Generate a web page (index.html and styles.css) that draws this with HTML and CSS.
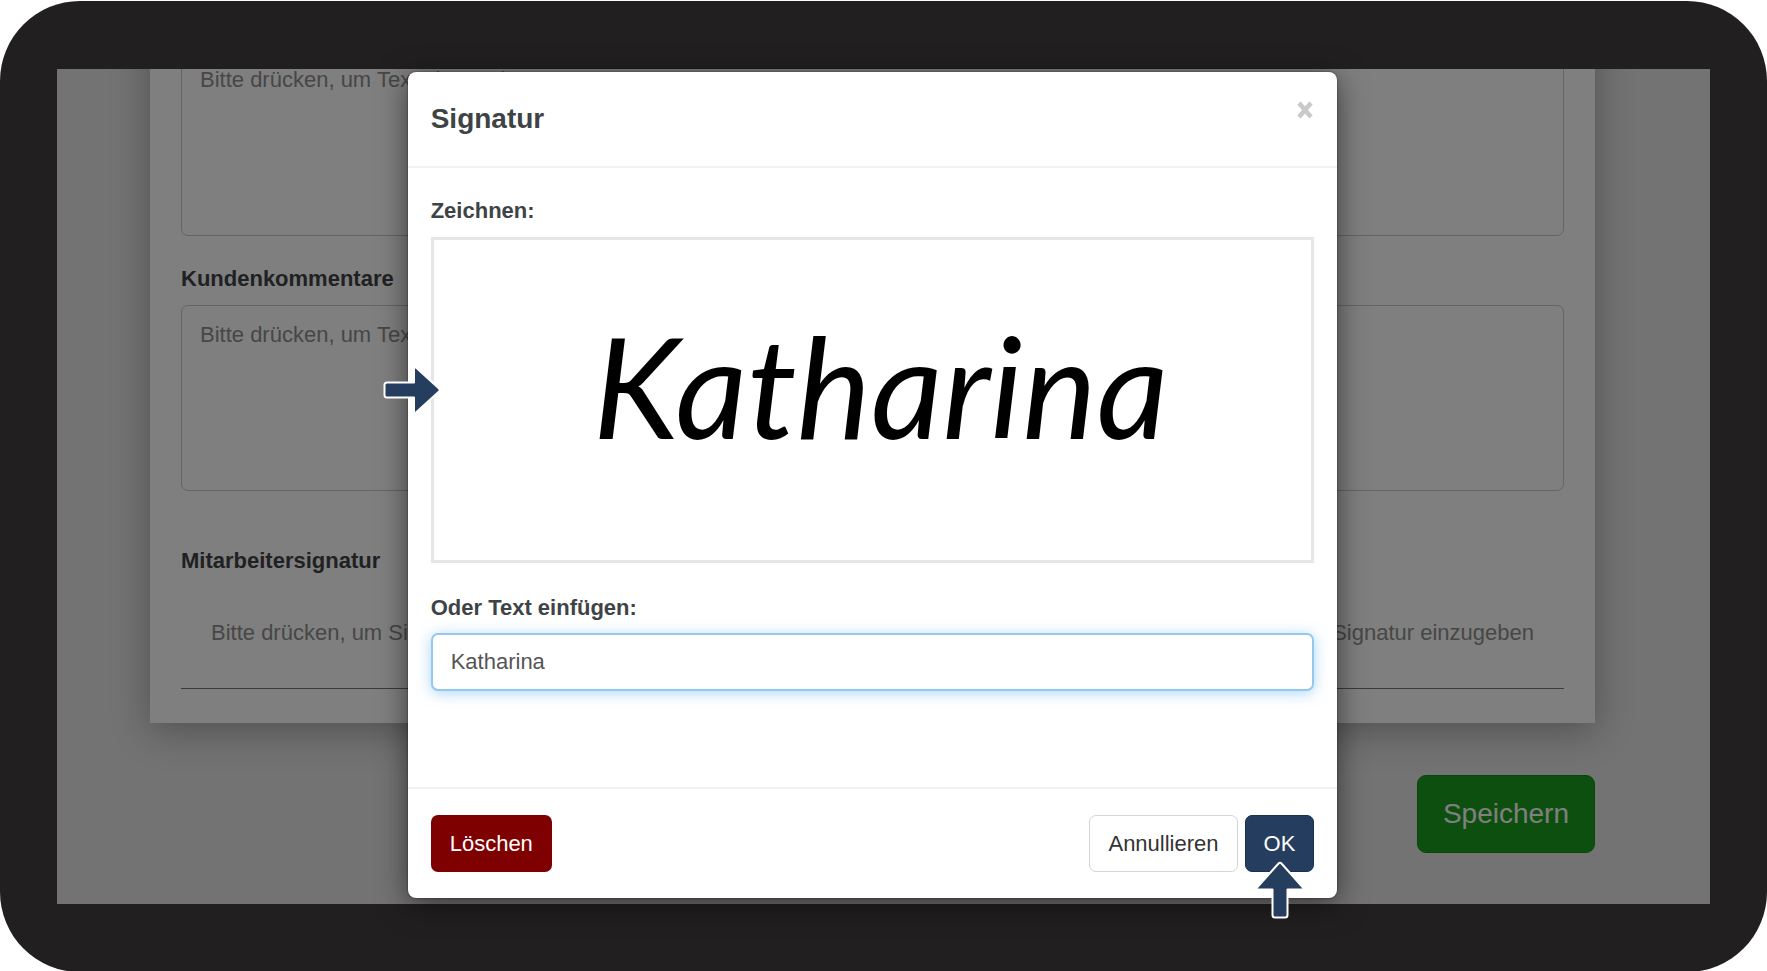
FILE: index.html
```html
<!DOCTYPE html>
<html lang="de">
<head>
<meta charset="utf-8">
<meta name="viewport" content="width=device-width, initial-scale=1">
<title>Signatur</title>
<link rel="stylesheet" href="styles.css">
</head>
<body>
<div class="device">
  <div class="screen">
    <main class="page">
      <section class="card">
        <textarea class="comment" aria-label="Kommentare" placeholder="Bitte drücken, um Text einzugeben"></textarea>
        <label class="label" for="customer-comments">Kundenkommentare</label>
        <textarea class="comment" id="customer-comments" placeholder="Bitte drücken, um Text einzugeben"></textarea>
        <h2 class="label label-signature">Mitarbeitersignatur</h2>
        <div class="signatures">
          <button class="sign" type="button">Bitte drücken, um Signatur einzugeben</button>
          <button class="sign" type="button">Bitte drücken, um Signatur einzugeben</button>
        </div>
      </section>
      <button class="save" type="button">Speichern</button>
    </main>
    <div class="backdrop">
      <div class="modal" role="dialog" aria-labelledby="modal-title">
        <header class="modal-header">
          <h1 class="modal-title" id="modal-title">Signatur</h1>
          <button class="close" type="button" aria-label="Schließen">
            <svg width="16" height="18" viewBox="0 0 16 18"><path d="M2 2 14 16M14 2 2 16" stroke="#c9c9c9" stroke-width="4.500" fill="none"/></svg>
          </button>
        </header>
        <div class="modal-body">
          <h2 class="label">Zeichnen:</h2>
          <div class="pad">
            <span class="ink">Katharina</span>
            <svg class="arrow arrow-right" width="58" height="50" viewBox="0 0 58 50"><path d="M4 17.500H31V4Q31 1 33.500 3L56 23.500Q57.500 25 56 26.500L33.500 47Q31 49 31 46V32.500H4Q1.500 32.500 1.500 30V20Q1.500 17.500 4 17.500Z" fill="#253d5f" stroke="#fff" stroke-width="2" stroke-linejoin="round"/></svg>
          </div>
          <label class="label label-text" for="signature-text">Oder Text einfügen:</label>
          <input class="field" id="signature-text" type="text" value="Katharina">
        </div>
        <footer class="modal-footer">
          <button class="btn btn-delete" type="button">Löschen</button>
          <button class="btn btn-cancel" type="button">Annullieren</button>
          <button class="btn btn-ok" type="button">OK
            <svg class="arrow arrow-up" width="50" height="58" viewBox="0 0 50 58"><path d="M17.500 54V28.500H3.500Q.500 28.500 2.500 26L23.500 2.500Q25 1 26.500 2.500L47.500 26Q49.500 28.500 46.500 28.500H32.500V54Q32.500 56.500 30 56.500H20Q17.500 56.500 17.500 54Z" fill="#253d5f" stroke="#fff" stroke-width="2" stroke-linejoin="round"/></svg>
          </button>
        </footer>
      </div>
    </div>
  </div>
</div>
</body>
</html>
```
FILE: styles.css
```css
* {
  box-sizing: border-box;
}

body {
  margin: 0;
  background: #fff;
  color: #3e4346;
  font: 22px/30px "Liberation Sans", Arial, sans-serif;
}

button,
input,
textarea {
  font: inherit;
}

button {
  cursor: pointer;
}

h1,
h2 {
  margin: 0;
}

.device {
  display: grid;
  min-height: calc(100vh - 1px);
  margin-top: 1px;
  padding: 68px 57px;
  border-radius: 80px;
  background: #221f20;
}

.screen {
  display: grid;
}

.page,
.backdrop {
  grid-area: 1 / 1;
  min-width: 0;
}

.page {
  display: flex;
  flex-direction: column;
  overflow: hidden;
  padding: 0 115px 48px 93px;
  background: #e6e6e6;
}

.card {
  display: flex;
  flex-direction: column;
  margin-top: -47px;
  padding: 28px 31px 34px;
  background: #fff;
  box-shadow: 0 8px 36px rgba(0, 0, 0, 0.3);
}

.comment {
  width: 100%;
  height: 186px;
  padding: 14px 18px;
  border: 1px solid #c8c8c8;
  border-radius: 7px;
  background: #fff;
  resize: none;
}

.comment::placeholder {
  color: #8e8e8e;
  opacity: 1;
}

.label {
  display: block;
  font-size: 22px;
  font-weight: bold;
  line-height: 30px;
}

.card .label {
  margin: 28px 0 11px;
}

.card .label-signature {
  margin: 55px 0 0;
}

.signatures {
  display: flex;
  justify-content: space-between;
  padding: 42px 30px 40px;
  border-bottom: 1px solid #777;
}

.sign {
  padding: 0;
  border: 0;
  background: none;
  color: #8e8e8e;
}

.save {
  align-self: flex-end;
  margin-top: 52px;
  padding: 22px 25px;
  border: 1px solid #148a17;
  border-radius: 9px;
  background: #1a9e1c;
  color: #fff;
  font-size: 28px;
  line-height: 32px;
}

.backdrop {
  display: flex;
  align-items: flex-start;
  justify-content: center;
  padding: 3px 22px 6px 0;
  background: rgba(0, 0, 0, 0.5);
}

.modal {
  width: 57%;
  border-radius: 8px;
  background: #fff;
  box-shadow: 0 6px 30px rgba(0, 0, 0, 0.55), 0 0 2px rgba(0, 0, 0, 0.6);
}

.modal-header {
  display: flex;
  align-items: flex-start;
  justify-content: space-between;
  padding: 29px 24px 29px 23px;
  border-bottom: 2px solid #f2f2f2;
}

.modal-title {
  font-size: 28px;
  line-height: 36px;
}

.close {
  display: flex;
  padding: 0;
  border: 0;
  background: none;
}

.modal-body {
  padding: 28px 23px 96px;
}

.pad {
  position: relative;
  display: flex;
  justify-content: center;
  height: 326px;
  margin-top: 11px;
  border: 3px solid #e6e6e6;
}

.ink {
  padding: 60px 0 0 16px;
  color: #000;
  font: italic 140px/170px Lato, sans-serif;
}

.arrow {
  position: absolute;
}

.arrow-right {
  top: 39%;
  left: -51px;
}

.label-text {
  margin-top: 30px;
}

.field {
  display: block;
  width: 100%;
  height: 58px;
  margin-top: 10px;
  padding: 0 18px;
  border: 2px solid #93c8f3;
  border-radius: 7px;
  outline: 0;
  background: #fff;
  box-shadow: 0 2px 14px rgba(90, 175, 240, 0.5);
  color: #555;
}

.modal-footer {
  display: flex;
  gap: 7px;
  padding: 26px 23px;
  border-top: 2px solid #f2f2f2;
}

.btn {
  position: relative;
  height: 57px;
  padding: 0 18px;
  border: 1px solid transparent;
  border-radius: 7px;
  color: #fff;
}

.btn-delete {
  margin-right: auto;
  background: #7f0000;
}

.btn-cancel {
  border-color: #d4d4d4;
  background: #fff;
  color: #333;
}

.btn-ok {
  border-color: #1b3150;
  background: #253d5f;
}

.arrow-up {
  top: 45px;
  left: 50%;
  margin-left: -24px;
}
```
